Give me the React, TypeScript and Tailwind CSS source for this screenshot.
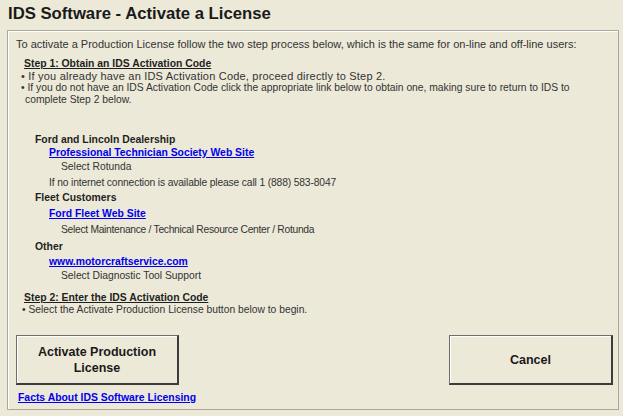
import React from "react";

const row = "h-[14px] leading-[14px] whitespace-nowrap";
const head = "font-bold text-[10.4px] text-[#1f1f1f]";
const link = "text-[10.4px] font-bold underline text-[#0000EE]";
const btn =
  "h-[50px] bg-[#ECE9D8] border border-[#6e6e6e] border-r-2 border-b-2 border-r-[#3c3c3c] border-b-[#3c3c3c] shadow-[inset_1px_1px_0_#ffffff] text-[12.5px] leading-[16px] font-bold text-[#1a1a1a] flex items-center justify-center text-center";

export default function App() {
  return (
    <div className="w-[623px] h-[416px] bg-[#ECE9D8] overflow-hidden font-['Liberation_Sans',Arial,sans-serif] text-[#333333]">
      <div className="h-[30px] pl-[8px] pt-[3px] text-[16.7px] leading-[22px] font-bold text-[#1a1a1a]">
        IDS Software - Activate a License
      </div>
      <div className="ml-[7px] w-[612px] h-[380px] border border-[#ACA899] shadow-[inset_1px_1px_0_#ffffff] flex flex-col pt-[6px] pl-[8px] text-[10.3px]">
        <div className={`${row} text-[11px]`}>
          To activate a Production License follow the two step process below, which is the same for on-line and off-line users:
        </div>
        <div className={`mt-[6px] h-[13px] leading-[13px] pl-[8px] underline ${head}`}>
          Step 1: Obtain an IDS Activation Code
        </div>
        <div className="pl-[5px] leading-[12px]">
          <div className="h-[12px] whitespace-nowrap text-[11px] tracking-[0.2px]">• If you already have an IDS Activation Code, proceed directly to Step 2.</div>
          <div className="h-[12px] whitespace-nowrap">• If you do not have an IDS Activation Code click the appropriate link below to obtain one, making sure to return to IDS to</div>
          <div className="h-[12px] whitespace-nowrap pl-[4px]">complete Step 2 below.</div>
        </div>

        <div className={`mt-[27px] h-[13px] leading-[13px] pl-[19px] ${head}`}>Ford and Lincoln Dealership</div>
        <div className={`${row} pl-[33px]`}>
          <span className={link}>Professional Technician Society Web Site</span>
        </div>
        <div className={`${row} pl-[45px]`}>Select Rotunda</div>
        <div className={`${row} mt-[2px] pl-[33px] tracking-[-0.15px]`}>If no internet connection is available please call 1 (888) 583-8047</div>

        <div className={`${row} mt-[1px] pl-[19px] ${head}`}>Fleet Customers</div>
        <div className={`${row} mt-[2px] pl-[33px]`}>
          <span className={link}>Ford Fleet Web Site</span>
        </div>
        <div className={`${row} mt-[2px] pl-[45px] tracking-[-0.3px]`}>Select Maintenance / Technical Resource Center / Rotunda</div>

        <div className={`${row} mt-[3px] pl-[19px] ${head}`}>Other</div>
        <div className={`${row} mt-[1px] pl-[33px]`}>
          <span className={link}>www.motorcraftservice.com</span>
        </div>
        <div className={`${row} pl-[45px]`}>Select Diagnostic Tool Support</div>

        <div className={`mt-[8px] h-[13px] leading-[13px] pl-[8px] underline ${head}`}>
          Step 2: Enter the IDS Activation Code
        </div>
        <div className="h-[12px] leading-[12px] pl-[6px] whitespace-nowrap">• Select the Activate Production License button below to begin.</div>

        <div className="mt-[19px] flex justify-between pr-[5px]">
          <button className={`${btn} w-[163px]`}>
            Activate Production
            <br />
            License
          </button>
          <button className={`${btn} w-[164px]`}>Cancel</button>
        </div>

        <div className={`${row} mt-[6px] pl-[2px]`}>
          <span className={link}>Facts About IDS Software Licensing</span>
        </div>
      </div>
    </div>
  );
}
